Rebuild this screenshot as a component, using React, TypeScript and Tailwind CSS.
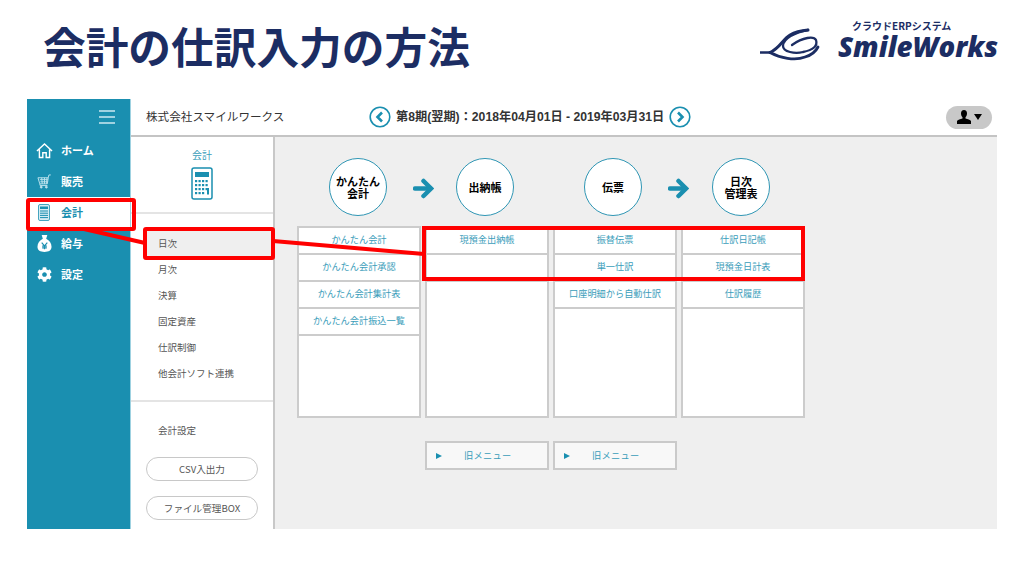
import React from 'react';
import { FaCog } from 'react-icons/fa';

const jp = { fontFamily: '"Noto Sans CJK JP", sans-serif' };

const HomeIcon = () => (
  <svg viewBox="0 0 18 18" className="w-[17px] h-[17px]" fill="none" stroke="white" strokeWidth="1.5">
    <path d="M1 9.5 9 2l8 7.5M3.6 8v8.4h3.6v-5h3.6v5h3.6V8" />
  </svg>
);

const CartIcon = () => (
  <svg viewBox="0 0 16 16" className="w-[15px] h-[15px]" fill="none" stroke="#bfe3ee" strokeWidth="1">
    <path d="M1 4h11l-1 6.5H3zM3 6h8.5M3.5 8.3h7.8M5 4l.6 6.5M8 4v6.5M10.6 4l-.4 6.5M3 10.5l.3 1.8h7.8M12 4l.7-3h2" />
    <circle cx="4.5" cy="14" r="1" fill="#bfe3ee" />
    <circle cx="10" cy="14" r="1" fill="#bfe3ee" />
  </svg>
);

const LedgerIcon = () => (
  <svg viewBox="0 0 12 17" className="w-[12px] h-[17px]">
    <rect x="0.5" y="0.5" width="11" height="16" rx="1.5" fill="#d4ecf3" stroke="#1a8fb0" strokeWidth="0.8" />
    <rect x="2" y="2.5" width="8" height="2.5" fill="#1a8fb0" />
    <path d="M2 7h8M2 9.2h8M2 11.4h8M2 13.6h8" stroke="#1a8fb0" strokeWidth="1" />
  </svg>
);

const BagIcon = () => (
  <svg viewBox="0 0 16 20" className="w-[15px] h-[19px]">
    <path d="M5 1h6L9.8 5c3.4 1.6 5.7 5 5.7 8.5 0 3.8-3 5.500-7.500 5.500S.5 17.300.5 13.500C.5 10 2.800 6.600 6.200 5z" fill="white" />
    <path d="M5 9l3 3.500L11 9M8 12.500V16M5.500 12.800h5M5.500 14.600h5" stroke="#1a8fb0" strokeWidth="1.200" fill="none" />
  </svg>
);

const CalcIcon = () => (
  <svg viewBox="0 0 22 33" className="w-[22px] h-[33px]">
    <rect x="1" y="1" width="20" height="31" rx="2" fill="white" stroke="#1a8fb0" strokeWidth="1.500" />
    <rect x="4" y="5" width="14" height="5" fill="#1a8fb0" />
    {[13, 17, 21, 25].flatMap(y => [4, 7.500, 11].map(x => <rect key={`${x}-${y}`} x={x} y={y} width="2.200" height="2.200" fill="#1a8fb0" />))}
    {[13, 17, 21].map(y => <rect key={y} x="14.500" y={y} width="2.200" height="2.200" fill="#1a8fb0" />)}
    <rect x="16" y="21" width="2" height="6.500" fill="#1a8fb0" />
  </svg>
);

const RoundChevron = ({ left }: { left?: boolean }) => (
  <svg viewBox="0 0 22 22" className="w-[22px] h-[22px] shrink-0" fill="none" stroke="#1a8fb0">
    <circle cx="11" cy="11" r="9.800" strokeWidth="1.600" fill="white" />
    <path d={left ? 'M13 6.500 8.500 11l4.500 4.500' : 'M9 6.500l4.500 4.500L9 15.500'} strokeWidth="2.600" />
  </svg>
);

const UserIcon = () => (
  <svg viewBox="0 0 14 14" className="w-[14px] h-[14px]" fill="black">
    <path d="M7 0c2 0 3 1.500 3 3.500 0 1.500-.7 3-1.500 3.700v1.300c2 .6 5 1.500 5.500 2.500V14H0v-3c.5-1 3.500-1.900 5.500-2.500V7.200C4.700 6.500 4 5 4 3.500 4 1.500 5 0 7 0z" />
  </svg>
);

const Logo = () => (
  <svg viewBox="15 12 70 36" className="w-[70px] h-[36px] mt-[7px] shrink-0" fill="none" stroke="#1c2d63" strokeLinecap="round">
    <path d="M15.500 37.500H25" strokeWidth="2.400" />
    <path d="M25 37.500C35 33 38 24 45 20c5-3 12-4.500 18-5" strokeWidth="3" />
    <path d="M63 15C50 17 38 24 38 31c0 6 12 8 20 6 10-2 15-6 13-12-2-4-13-3-24 5" strokeWidth="2.300" />
    <path d="M25 37.500c10 5.500 25 8.500 35 4.500 7-2 11-6 13-10" strokeWidth="2.800" />
  </svg>
);

const nav = [
  { label: 'ホーム', icon: <HomeIcon /> },
  { label: '販売', icon: <CartIcon /> },
  { label: '会計', icon: <LedgerIcon />, active: true },
  { label: '給与', icon: <BagIcon /> },
  { label: '設定', icon: <FaCog className="w-[15px] h-[15px] text-white" /> },
];

const subnav = ['日次', '月次', '決算', '固定資産', '仕訳制御', '他会計ソフト連携'];

const columns = [
  ['かんたん会計', 'かんたん会計承認', 'かんたん会計集計表', 'かんたん会計振込一覧'],
  ['現預金出納帳', ''],
  ['振替伝票', '単一仕訳', '口座明細から自動仕訳'],
  ['仕訳日記帳', '現預金日計表', '仕訳履歴'],
];

const Circle = ({ lines }: { lines: string[] }) => (
  <div className="w-[58px] h-[58px] rounded-full bg-white border-[1.5px] border-[#2f96b4] flex flex-col items-center justify-center text-[11px] leading-[12px] font-bold text-black shrink-0">
    {lines.map(l => <span key={l}>{l}</span>)}
  </div>
);

const Arrow = () => (
  <svg viewBox="0 0 21 21" className="w-[21px] h-[21px] mt-[3px] shrink-0" fill="none" stroke="#1a8fb0" strokeWidth="4.500">
    <path d="M2 10.500h15" strokeLinecap="round" />
    <path d="M10.500 3l7.500 7.500-7.500 7.500" strokeLinecap="round" strokeLinejoin="miter" />
  </svg>
);

const OldMenu = () => (
  <div className="w-[124px] h-[29px] bg-[#f8f8f8] border-2 border-[#cacaca] flex items-center pl-[9px] text-[9.200px] text-[#3a9dba]">
    <span className="w-0 h-0 border-y-[3.500px] border-y-transparent border-l-[6px] border-l-[#1a8fb0]" />
    <span className="ml-[22px] tracking-[0.300px]">旧メニュー</span>
  </div>
);

export default function App() {
  return (
    <div className="relative w-[1024px] h-[576px] bg-white overflow-hidden" style={jp}>
      <header className="h-[99px] flex items-start justify-between pl-[43px] pr-[26px]">
        <h1 className="text-[42.700px] leading-none font-bold text-[#1c2d63] mt-[24px]">会計の仕訳入力の方法</h1>
        <div className="flex items-start mt-[20px]">
          <Logo />
          <div className="ml-[8px] w-[160px]">
            <div className="pl-[14px] text-[10px] leading-[11px] font-bold text-[#1c2d63]">クラウドERPシステム</div>
            <div className="text-[27.600px] leading-[30px] font-extrabold italic text-[#1c2d63] whitespace-nowrap" style={{ fontFamily: '"Open Sans", sans-serif' }}>SmileWorks</div>
          </div>
        </div>
      </header>

      <div className="ml-[27px] w-[970px] h-[430px] flex">
        <aside className="w-[104px] bg-[#1a8fb0] border-r border-[#9fd2e1] shrink-0">
          <div className="h-[36px] flex justify-end items-center pr-[15px]">
            <div className="w-[16px] h-[14px] flex flex-col justify-between">
              <span className="h-[2px] bg-[#9fd2e1]" />
              <span className="h-[2px] bg-[#9fd2e1]" />
              <span className="h-[2px] bg-[#9fd2e1]" />
            </div>
          </div>
          <nav className="flex flex-col">
            {nav.map(n => (
              <div key={n.label} className={`h-[31px] flex items-center ${n.active ? 'bg-white text-[#1a8fb0]' : 'text-white'}`}>
                <span className="w-[34px] flex justify-center">{n.icon}</span>
                <span className="text-[11px] font-bold">{n.label}</span>
              </div>
            ))}
          </nav>
        </aside>

        <div className="flex-1 flex flex-col min-w-0">
          <div className="h-[38px] bg-white border-b-2 border-[#c4c4c4] flex items-center pl-[15px] pr-[5px] shrink-0">
            <span className="w-[223px] shrink-0 text-[11.600px] text-[#333]">株式会社スマイルワークス</span>
            <RoundChevron left />
            <span className="ml-[5px] mr-[5px] w-[268px] shrink-0 text-[12.200px] font-bold text-[#333] whitespace-nowrap" style={{ fontFamily: '"Liberation Sans", "Noto Sans CJK JP", sans-serif' }}>第8期(翌期)：2018年04月01日 - 2019年03月31日</span>
            <RoundChevron />
            <div className="ml-auto w-[46px] h-[23px] rounded-full bg-[#c8c8c8] flex items-center justify-center gap-[3px]">
              <UserIcon />
              <span className="w-0 h-0 border-x-[4px] border-x-transparent border-t-[6px] border-t-black" />
            </div>
          </div>

          <div className="flex-1 flex min-h-0">
            <div className="w-[144px] bg-white border-r-2 border-[#c8c8c8] shrink-0 flex flex-col">
              <div className="h-[77px] border-b-2 border-[#e4e4e4] flex flex-col items-center pt-[11px] gap-[5px]">
                <span className="text-[10px] leading-[14px] text-[#3a9dba]">会計</span>
                <CalcIcon />
              </div>
              <div className="h-[188px] border-b-2 border-[#e4e4e4] pt-[16px] pl-[14px] flex flex-col">
                {subnav.map((s, i) => (
                  <div key={s} className={`h-[26px] flex items-center pl-[13px] text-[9.500px] text-[#555] ${i === 0 ? 'bg-[#efefef]' : ''}`}>{s}</div>
                ))}
              </div>
              <div className="pl-[27px] pt-[21px] text-[9.500px] leading-[14px] text-[#555]">会計設定</div>
              <div className="flex flex-col gap-[15px] pl-[15px] pt-[20px] text-[9.600px] text-[#555]">
                <div className="w-[112px] h-[24px] rounded-full border border-[#c8c8c8] flex items-center justify-center">CSV入出力</div>
                <div className="w-[112px] h-[24px] rounded-full border border-[#c8c8c8] flex items-center justify-center">ファイル管理BOX</div>
              </div>
            </div>

            <main className="flex-1 bg-[#efefef] pt-[21px] pl-[22px]">
              <div className="flex items-center pl-[32px]">
                <Circle lines={['かんたん', '会計']} />
                <span className="w-[26px]" />
                <Arrow />
                <span className="w-[22px]" />
                <Circle lines={['出納帳']} />
                <span className="w-[70px]" />
                <Circle lines={['伝票']} />
                <span className="w-[26px]" />
                <Arrow />
                <span className="w-[23px]" />
                <Circle lines={['日次', '管理表']} />
              </div>
              <div className="flex gap-[4px] mt-[10px] h-[192px]">
                {columns.map((col, c) => (
                  <div key={c} className="w-[124px] bg-white border-2 border-[#cccccc] flex flex-col">
                    {col.map((row, r) => (
                      <div key={r} className="h-[27px] border-b-2 border-[#cccccc] pb-[1px] flex items-center justify-center text-[9.200px] text-[#3a9dba] whitespace-nowrap shrink-0">{row}</div>
                    ))}
                  </div>
                ))}
              </div>
              <div className="flex gap-[4px] mt-[23px] ml-[128px]">
                <OldMenu />
                <OldMenu />
              </div>
            </main>
          </div>
        </div>
      </div>

      {/* 赤枠と引き出し線 */}
      <svg className="absolute inset-0 w-[1024px] h-[576px] pointer-events-none" viewBox="0 0 1024 576" fill="none" stroke="#ff0000" strokeWidth="4">
        <path d="M84 229 145 243M273 241 424 254" />
      </svg>
      <div className="absolute left-[26px] top-[198px] w-[110px] h-[33px] border-4 border-[#ff0000] rounded-[3px]" />
      <div className="absolute left-[143px] top-[227px] w-[132px] h-[33px] border-4 border-[#ff0000] rounded-[3px]" />
      <div className="absolute left-[422px] top-[226px] w-[383px] h-[55px] border-4 border-[#ff0000]" />
    </div>
  );
}
